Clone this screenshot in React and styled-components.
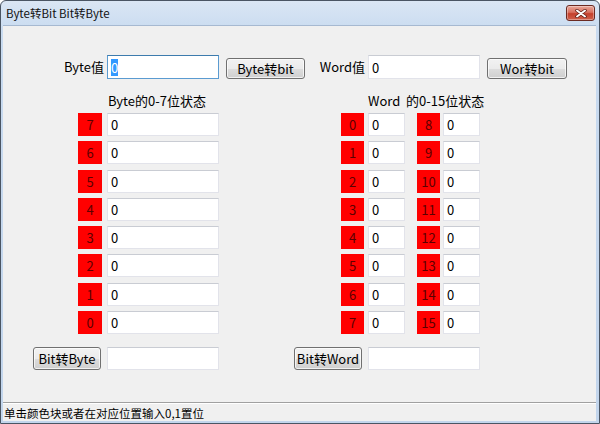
import React from 'react'
import styled, { createGlobalStyle } from 'styled-components'

const GlobalStyle = createGlobalStyle`
  html, body {
    margin: 0;
    padding: 0;
    background: #ffffff;
  }
  body {
    font-family: "Noto Sans CJK SC", "Noto Sans", sans-serif;
  }
`

const Window = styled.div`
  width: 600px;
  height: 424px;
  box-sizing: border-box;
  border: 1px solid #4a5563;
  border-radius: 6px 6px 0 0;
  background: linear-gradient(#dae6f4 0px, #c9dbf0 30px, #c2d5ec 100%);
  padding: 0 3px 2px 2px;
  display: flex;
  flex-direction: column;
  overflow: hidden;
`

const TitleBar = styled.div`
  height: 24px;
  flex: none;
  display: flex;
  align-items: flex-start;
  justify-content: space-between;
`

const Title = styled.div`
  padding: 4px 0 0 3px;
  font-size: 11.5px;
  line-height: 16px;
  color: #111;
`

const CloseBtn = styled.div`
  margin: 4px 1px 0 0;
  width: 29px;
  height: 16px;
  box-sizing: border-box;
  border: 1px solid #6b2a22;
  border-radius: 3px;
  background: linear-gradient(#e9a99b 0%, #d9705f 45%, #c4402c 55%, #d0614c 100%);
  box-shadow: inset 0 0 0 1px rgba(255, 255, 255, 0.35);
  display: flex;
  align-items: center;
  justify-content: center;
`

const Client = styled.div`
  flex: 1;
  background: #f0f0f0;
  display: flex;
  flex-direction: column;
  border-top: 1px solid #a6b9d1;
`

const Form = styled.div`
  flex: 1;
  display: grid;
  grid-template-columns: 104px 112px 86px 63px 112px 1fr;
  grid-template-rows: 24px 34px repeat(8, 28.3px) 31px;
  padding-top: 29px;
  font-size: 13px;
  color: #000;
`

const Label = styled.div`
  grid-column: ${(p) => p.col};
  grid-row: ${(p) => p.row};
  justify-self: end;
  align-self: center;
  margin-right: 3px;
  line-height: 18px;
  white-space: nowrap;
`

const Heading = styled.div`
  grid-column: ${(p) => p.col} / span 2;
  grid-row: 2;
  align-self: end;
  margin: 0 0 4px ${(p) => p.indent || 0}px;
  line-height: 17px;
  white-space: pre;
`

const Field = styled.div`
  grid-column: ${(p) => p.col || 'auto'};
  grid-row: ${(p) => p.row || 'auto'};
  width: ${(p) => p.w || 112}px;
  height: ${(p) => p.h || 23}px;
  align-self: ${(p) => (p.end ? 'end' : 'start')};
  box-sizing: border-box;
  background: #ffffff;
  border: 1px solid ${(p) => (p.focus ? '#5b9bd1' : '#e2e3ea')};
  border-top-color: ${(p) => (p.focus ? '#3d7bad' : '#c9ccd3')};
  padding-left: 3px;
  display: flex;
  align-items: center;
  font-size: 13px;
  line-height: 17px;
  flex: none;
`

const Selected = styled.span`
  background: #3399ff;
  color: #ffffff;
`

const Bit = styled.div`
  grid-column: ${(p) => p.col || 'auto'};
  grid-row: ${(p) => p.row || 'auto'};
  justify-self: end;
  align-self: start;
  margin-right: ${(p) => p.mr || 0}px;
  margin-left: ${(p) => p.ml || 0}px;
  width: ${(p) => p.w || 24}px;
  height: 23px;
  background: #ff0000;
  color: #5c0000;
  font-size: 13px;
  display: flex;
  align-items: center;
  justify-content: center;
  flex: none;
  cursor: pointer;
`

const Button = styled.button`
  grid-column: ${(p) => p.col};
  grid-row: ${(p) => p.row};
  justify-self: ${(p) => (p.right ? 'end' : 'start')};
  align-self: end;
  margin: 0 ${(p) => p.mr || 0}px 0 ${(p) => p.ml || 0}px;
  width: ${(p) => p.w}px;
  height: ${(p) => p.h || 21}px;
  padding: 0;
  border: 1px solid #707070;
  border-radius: 3px;
  background: linear-gradient(#f2f2f2 0%, #ebebeb 50%, #dddddd 51%, #cfcfcf 100%);
  box-shadow: inset 0 0 0 1px rgba(255, 255, 255, 0.7);
  font-family: inherit;
  font-size: 13px;
  line-height: 17px;
  color: #000;
  white-space: nowrap;
`

const WordPair = styled.div`
  grid-column: 5;
  grid-row: ${(p) => p.row};
  display: flex;
  align-items: flex-start;
`

const StatusBar = styled.div`
  height: 18px;
  flex: none;
  border-top: 1px solid #a0a0a0;
  box-shadow: inset 0 1px 0 #ffffff;
  background: #f0f0f0;
  font-size: 11.5px;
  line-height: 20px;
  padding-left: 1px;
  color: #000;
`

const byteBits = [7, 6, 5, 4, 3, 2, 1, 0]

export default function App() {
  return (
    <>
      <GlobalStyle />
      <Window>
        <TitleBar>
          <Title>Byte转Bit Bit转Byte</Title>
          <CloseBtn>
            <svg width="12" height="9" viewBox="0 0 12 9">
              <path d="M2 1.5 L10 7.5 M10 1.5 L2 7.5" stroke="#5a1a12" strokeWidth="3.4" strokeLinecap="round" />
              <path d="M2 1.5 L10 7.5 M10 1.5 L2 7.5" stroke="#ffffff" strokeWidth="2" strokeLinecap="round" />
            </svg>
          </CloseBtn>
        </TitleBar>
        <Client>
          <Form>
            <Label col={1} row={1}>Byte值</Label>
            <Field col={2} row={1} h={24} focus>
              <Selected>0</Selected>
            </Field>
            <Button col={3} row={1} ml={7} w={79}>Byte转bit</Button>
            <Label col={4} row={1}>Word值</Label>
            <Field col={5} row={1} h={24}>0</Field>
            <Button col={6} row={1} ml={7} w={80}>Wor转bit</Button>

            <Heading col={2} indent={1}>Byte的0-7位状态</Heading>
            <Heading col={5}>{'Word  的0-15位状态'}</Heading>

            {byteBits.map((b, i) => (
              <React.Fragment key={'b' + b}>
                <Bit col={1} row={i + 3} mr={5}>{b}</Bit>
                <Field col={2} row={i + 3}>0</Field>
              </React.Fragment>
            ))}

            {byteBits.map((_, i) => (
              <React.Fragment key={'w' + i}>
                <Bit col={4} row={i + 3} mr={4} w={23}>{i}</Bit>
                <WordPair row={i + 3}>
                  <Field w={37}>0</Field>
                  <Bit w={23} ml={12} mr={3}>{i + 8}</Bit>
                  <Field w={37}>0</Field>
                </WordPair>
              </React.Fragment>
            ))}

            <Button col={1} row={11} right mr={6} w={68} h={23}>Bit转Byte</Button>
            <Field col={2} row={11} end></Field>
            <Button col={4} row={11} right mr={6} w={68} h={23}>Bit转Word</Button>
            <Field col={5} row={11} end></Field>
          </Form>
          <StatusBar>单击颜色块或者在对应位置输入0,1置位</StatusBar>
        </Client>
      </Window>
    </>
  )
}
